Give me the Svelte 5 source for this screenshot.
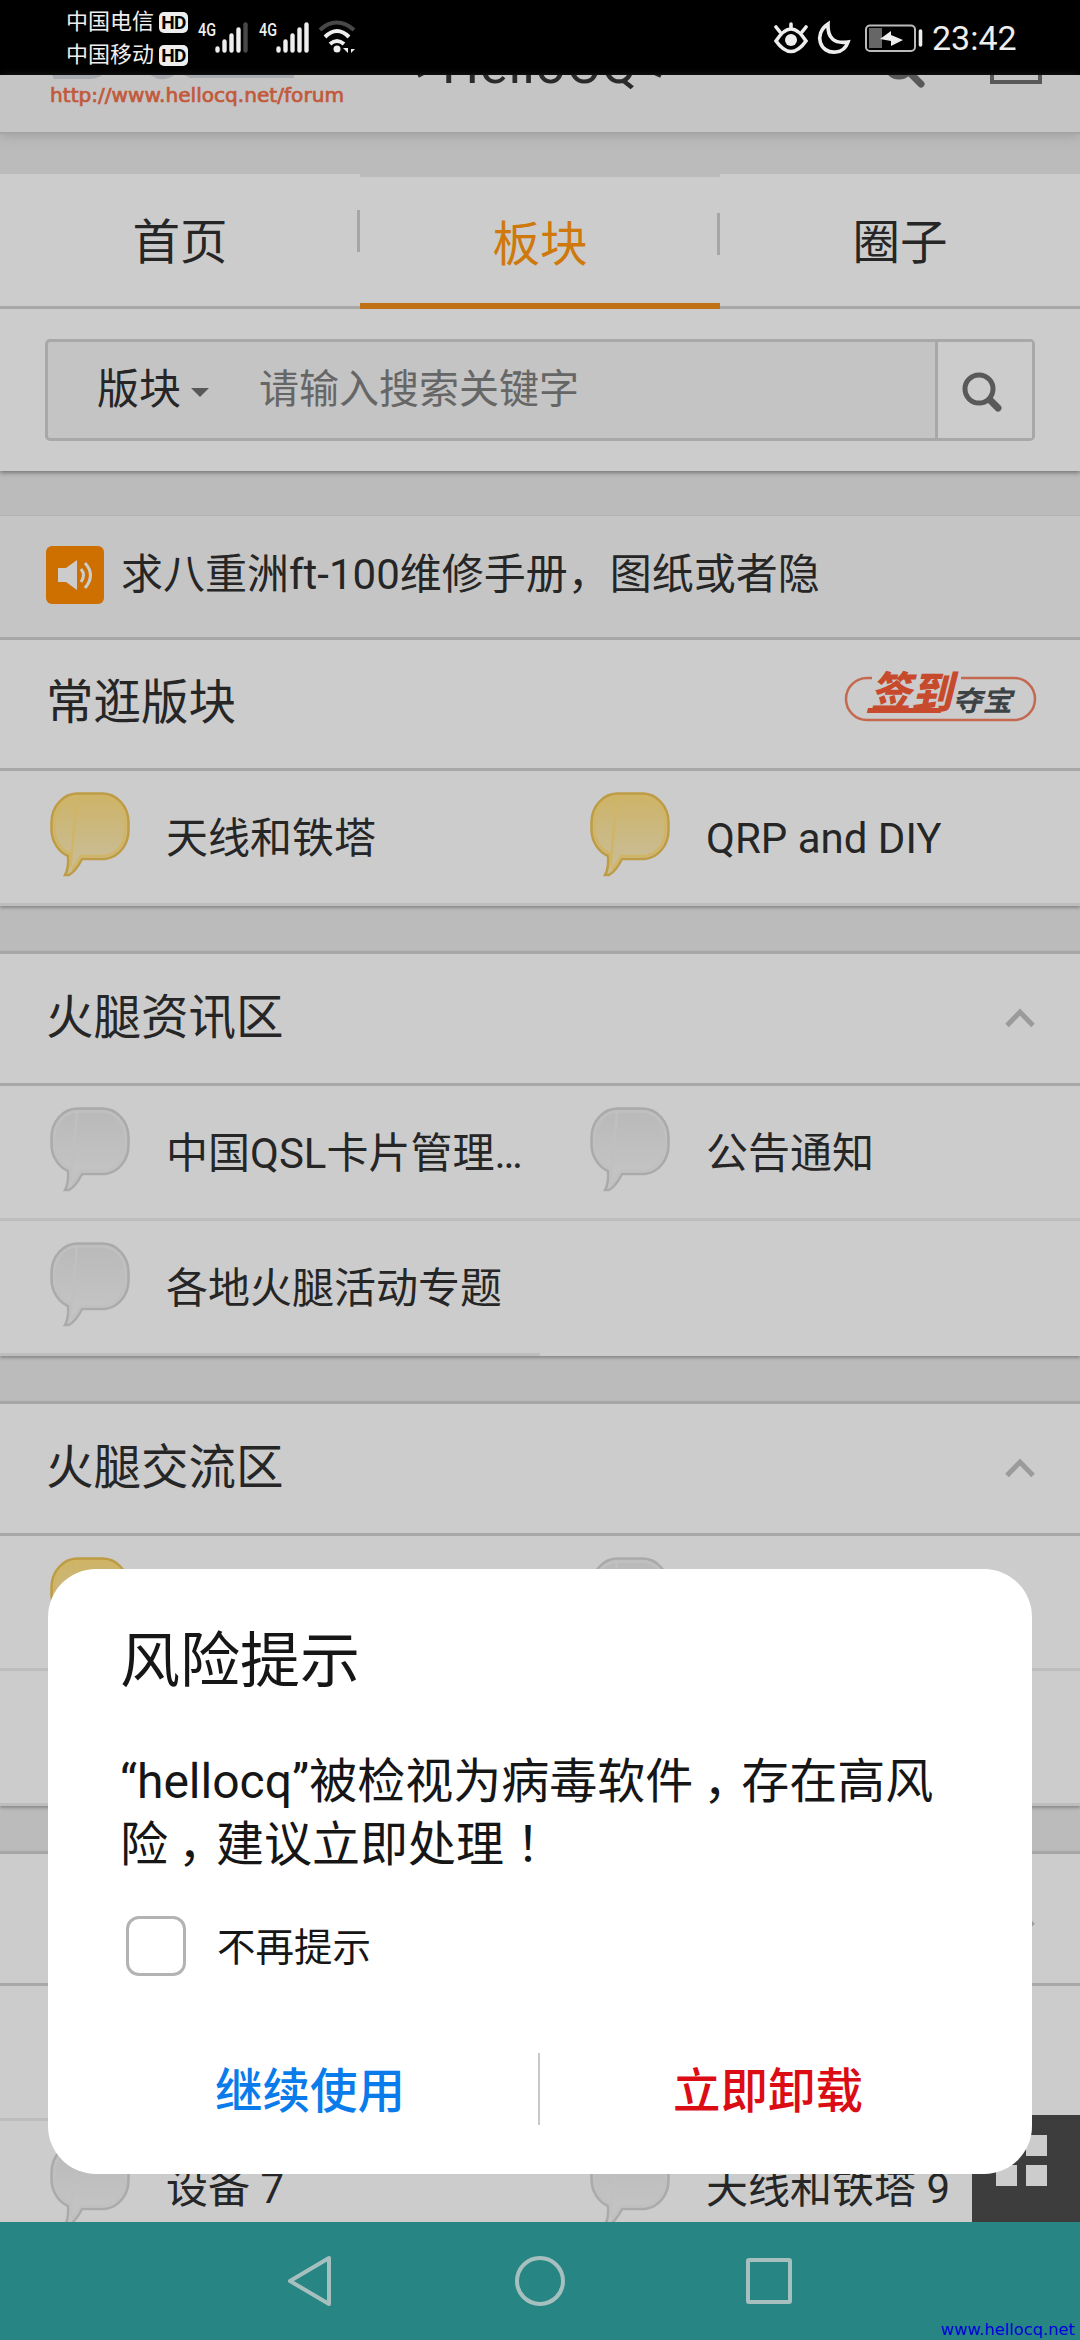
<script>
  const sections = [
    {
      title: '常逛版块', first: true,
      rows: [[{ t: '天线和铁塔', hot: true }, { t: 'QRP and DIY', hot: true }]]
    },
    {
      title: '火腿资讯区',
      rows: [[{ t: '中国QSL卡片管理…' }, { t: '公告通知' }], [{ t: '各地火腿活动专题' }]]
    },
    {
      title: '火腿交流区',
      rows: [[{ t: '', hot: true }, { t: '' }], [{ t: '' }, { t: '' }]]
    },
    {
      title: '',
      rows: [[{ t: '' }, { t: '' }], [{ t: '设备 7' }, { t: '天线和铁塔 9' }]]
    }
  ];
  const signals = [{ dim: true }, { dim: false }];
</script>

<div class="screen">
  <div class="status">
    <div class="carriers">
      {#each ['中国电信', '中国移动'] as name}
        <div class="carrier"><span>{name}</span><b>HD</b></div>
      {/each}
    </div>
    <div class="radios">
      {#each signals as s}
        <svg width="61" height="40" viewBox="0 0 61 40">
          <text x="9" y="17" class="g4" textLength="18" lengthAdjust="spacingAndGlyphs">4G</text>
          <g stroke="#eee" stroke-width="4.4" stroke-linecap="round">
            <path d="M28.500 31.500v-2M35.500 31.500v-9M42.500 31.500v-15M49.500 31.500v-21" />
            <path d="M56.500 31.500v-26" stroke={s.dim ? '#484848' : '#eee'} />
          </g>
        </svg>
      {/each}
      <svg class="wifi" width="38" height="40" viewBox="0 2 38 40" fill="none" stroke-width="4">
        <path d="M2 13C12 3 25 3 36 13" stroke="#484848" />
        <path d="M7 20C15 12 23 12 31 20M12 27Q19 21 26 27" stroke="#eee" />
        <circle cx="19" cy="32" r="3.5" fill="#eee" />
        <path d="M30 28v8l-5-5h5M33 27v9l4-4h-4" fill="#eee" />
      </svg>
    </div>
    <svg class="right-icons" width="151" height="40" viewBox="0 0 151 40" fill="none" stroke="#eee" stroke-width="3.600">
      <path d="M2 23Q17-1 32 23Q17 44 2 23Z" />
      <circle cx="17" cy="22" r="6" fill="#eee" stroke="none" />
      <path d="M17 10V6M6 14L2 9M28 14l4-5" stroke-linecap="round" />
      <path d="M54 6C39 16 46 36 62 34Q71 33 74 24Q53 27 54 6Z" />
      <rect x="92" y="7.5" width="49" height="25.5" rx="4" stroke="#bbb" stroke-width="2" />
      <path d="M95 10h13v20H95z" fill="#666" stroke="none" />
      <path d="M106 21l11-8v4l12 5-12 6v-5z" fill="#eee" stroke="none" />
      <path d="M146.500 13v14" stroke-linecap="round" />
    </svg>
    <span class="clock">23:42</span>
  </div>

  <div class="appbar">
    <svg width="1080" height="57" viewBox="0 75 1080 57" fill="none">
      <path d="M52 75h50q-4 4-14 4H54zM150 75h24q-5 5-16 4zM184 75h110v3H190z" fill="#a9adb2" />
      <text x="50" y="102" class="url" textLength="294" lengthAdjust="spacingAndGlyphs">http://www.hellocq.net/forum</text>
      <text x="442" y="83" class="brand" textLength="195">HelloCQ</text>
      <path d="M429 70l-11 6M648 70l13 6" stroke="#2a2a2a" stroke-width="4" />
      <circle cx="899" cy="64" r="13" stroke="#595959" stroke-width="5" />
      <path d="M910 73l11 11" stroke="#595959" stroke-width="7" stroke-linecap="round" />
      <rect x="992" y="45" width="48" height="37" stroke="#595959" stroke-width="4" />
    </svg>
  </div>

  <div class="tabs">
    <span class="tab">首页</span>
    <span class="tab active">板块</span>
    <span class="tab">圈子</span>
  </div>

  <div class="search-row">
    <div class="search">
      <span class="kind">版块</span>
      <i class="caret"></i>
      <span class="ph">请输入搜索关键字</span>
      <span class="go">
        <svg width="44" height="44" viewBox="0 0 44 44" fill="none" stroke="#595959">
          <circle cx="19" cy="19" r="14" stroke-width="5" />
          <path d="M30 30l8 8" stroke-width="7" stroke-linecap="round" />
        </svg>
      </span>
    </div>
  </div>

  <div class="notice">
    <svg width="58" height="58" viewBox="0 0 58 58">
      <rect width="58" height="58" rx="6" fill="#cd7000" />
      <path d="M12 22h8l11-8v30l-11-8h-8z" fill="#ccc" />
      <path d="M35 23q5 6 0 13M39 17q11 12 0 25" fill="none" stroke="#ccc" stroke-width="3" />
    </svg>
    <span>求八重洲ft-100维修手册，图纸或者隐</span>
  </div>

  {#each sections as s}
    <section class:first={s.first}>
      <div class="head">
        <span>{s.title}</span>
        {#if s.first}
          <svg class="badge" width="194" height="56" viewBox="0 0 194 56">
            <path d="M28 10H23A20.500 20.500 0 0 0 23 52H170A20.500 20.500 0 0 0 170 10H117" fill="none" stroke="#c4694f" stroke-width="2.500" />
            <g transform="skewX(-14)">
              <text x="36" y="40" class="sign" textLength="82" lengthAdjust="spacingAndGlyphs">签到</text>
              <path d="M34 42.500h74" stroke="#c74a2c" stroke-width="5" />
              <text x="119" y="43" class="prize" textLength="60" lengthAdjust="spacingAndGlyphs">夺宝</text>
            </g>
          </svg>
        {:else}
          <svg class="chev" width="30" height="20" viewBox="0 0 30 20" fill="none" stroke="#9b9b9b" stroke-width="5">
            <path d="M2 17.500L15 4l13 13.500" />
          </svg>
        {/if}
      </div>
      {#each s.rows as row}
        <div class="row">
          {#each row as c}
            <div class="cell" class:hot={c.hot}>
              <svg width="82" height="86" viewBox="-1 -1 82 86">
                <defs>
                  <linearGradient id="yellow" x2="0" y2="1"><stop offset="0" stop-color="#cdb366" /><stop offset=".75" stop-color="#cabc91" /></linearGradient>
                  <linearGradient id="gray" x2="0" y2="1"><stop offset="0" stop-color="#b9b9b9" /><stop offset=".75" stop-color="#c3c3c3" /></linearGradient>
                </defs>
                <path class="edge" fill={c.hot ? 'url(#yellow)' : 'url(#gray)'} d="M27 1.500H53A26 29 0 0 1 78.500 30V38A26 29 0 0 1 55 67H32Q26 79 19 83H15Q19 76 18 64A27 29 0 0 1 1.500 38V30A26 29 0 0 1 27 1.500Z" />
                <path class="shine" d="M27 4.500H53A23 26 0 0 1 75.500 30V38A23 26 0 0 1 54 64H31Q27 72 22 77M20.500 74L21 62A24 26 0 0 1 4.500 38V30A23 26 0 0 1 27 4.500Z" />
              </svg>
              <span>{c.t}</span>
            </div>
          {/each}
        </div>
      {/each}
    </section>
  {/each}

  <div class="fab"><i></i><i></i><i></i><i></i></div>

  <div class="dialog">
    <h1>风险提示</h1>
    <p>“hellocq”被检视为病毒软件<span class="mid">，</span>存在高风险<span class="mid">，</span>建议立即处理<span class="tc">！</span></p>
    <div class="check"><i></i><span>不再提示</span></div>
    <div class="actions">
      <span class="keep">继续使用</span>
      <span class="remove">立即卸载</span>
    </div>
  </div>

  <div class="nav">
    <svg width="1080" height="118" viewBox="0 0 1080 118" fill="none" stroke="#a6c0bf" stroke-width="4" stroke-linejoin="round">
      <path d="M329 36v46L290 59Z" />
      <circle cx="540" cy="59" r="23" />
      <rect x="748" y="38" width="42" height="42" rx="1" />
    </svg>
    <span class="mark">www.hellocq.net</span>
  </div>
</div>

<style>
  :global(body) { margin: 0; background: #bbb; }
  .screen {
    position: relative; width: 1080px; height: 2340px; overflow: hidden; background: #bbb; color: #262626;
    font-family: Roboto, 'Noto Sans CJK SC', sans-serif; font-size: 42px; line-height: 1;
  }
  .screen * { box-sizing: border-box; }
  svg { display: block; flex: none; }
  .status { height: 75px; background: #000; display: flex; color: #eee; padding-left: 66px; }
  .carriers { display: flex; flex-direction: column; gap: 11px; padding-top: 11px; }
  .carrier { display: flex; align-items: center; height: 22px; gap: 5px; font-size: 22px; white-space: nowrap; }
  .carrier b {
    width: 29px; height: 21px; border-radius: 5px; background: #eee; color: #000; font-size: 19px;
    line-height: 21px; text-align: center; letter-spacing: -0.5px;
  }
  .radios { display: flex; padding: 19px 0 0 1px; }
  .wifi { margin-left: 7px; }
  .g4 { font: 500 18px Roboto, sans-serif; fill: #eee; }
  .right-icons { margin: 18px 0 0 auto; }
  .clock { width: 155px; padding-left: 7px; font-size: 34px; line-height: 77px; }
  .appbar { height: 57px; background: #c5c5c5; box-shadow: 0 2px 0 #a6a6a6, 0 4px 10px #8888; }
  .url { font: 19.500px 'DejaVu Sans', sans-serif; fill: #c2593b; stroke: #c2593b; stroke-width: .7px; }
  .brand { font: 52px Roboto, sans-serif; fill: #2a2a2a; }
  .tabs { display: flex; height: 135px; margin-top: 42px; background: linear-gradient(90deg, #ccc 360px, #bbb 360px, #bbb 720px, #ccc 720px) 0 0 / 100% 3px no-repeat, #ccc; }
  .tab {
    width: 360px; display: flex; align-items: center; justify-content: center; padding-top: 7px;
    border-bottom: 3px solid #a8a8a8; font-size: 47.500px;
    background: linear-gradient(#a6a6a6, #a6a6a6) 357px 36px / 3px 42px no-repeat;
  }
  .tab.active { color: #cf780b; border-bottom: 6px solid #c07015; padding-top: 15px; background-position: 357px 39px; }
  .tab:last-child { background: none; }
  .search-row { height: 162px; padding: 30px 45px; background: #ccc; box-shadow: 0 2px 4px #777; }
  .search {
    height: 102px; display: flex; align-items: center; border: 3px solid #a8a8a8; border-radius: 5px; background: #c4c4c4;
  }
  .kind { padding: 0 0 1px 49px; }
  .caret { border: 9px solid transparent; border-top-color: #595959; border-bottom: 0; margin: 5px 0 0 10px; }
  .ph { color: #666; font-size: 40px; padding-left: 50px; }
  .go { margin-left: auto; width: 97px; height: 96px; background: #ccc; border-left: 3px solid #a8a8a8; display: flex; align-items: center; padding: 4px 0 0 22px; }
  .notice {
    height: 125px; margin-top: 44px; padding: 0 0 4px 46px; border-bottom: 3px solid #a8a8a8; border-top: 1px solid #b3b3b3; background: #c5c5c5;
    display: flex; align-items: center; gap: 17px; white-space: nowrap;
  }
  section { margin-bottom: 45px; border-top: 3px solid #a6a6a6; background: #ccc; box-shadow: 0 2px 3px #888; }
  section.first { border-top: 0; }
  .head { height: 132px; padding: 0 46px; display: flex; align-items: center; justify-content: space-between; border-bottom: 3px solid #a8a8a8; font-size: 47.500px; }
  .first .head { height: 131px; padding-bottom: 0; }
  .badge { margin: -17px -4px 0 0; overflow: visible; }
  .chev { margin: -2px -1px 0 0; }
  .sign { font: 900 43px 'Noto Sans CJK SC', sans-serif; fill: #c74a2c; }
  .prize { font: 700 28px 'Noto Sans CJK SC', sans-serif; fill: #3d4245; }
  .row { height: 135px; display: flex; }
  .cell { width: 540px; display: flex; align-items: flex-start; border-bottom: 3px solid #bdbdbd; padding: 20px 0 0 49px; gap: 35px; white-space: nowrap; }
  .cell span { line-height: 96px; }
  .edge { stroke: #aaa; stroke-width: 2.500px; }
  .shine { fill: none; stroke: #c0c0c0; stroke-width: 2.500px; }
  .hot .edge { stroke: #bd9c45; }
  .hot .shine { stroke: #d1b566; }
  .fab {
    position: absolute; left: 972px; top: 2115px; width: 108px; height: 107px; background: #3d3d3d;
    display: grid; grid-template-columns: 21px 21px; grid-auto-rows: 21px; gap: 9px; padding: 20px 24px;
  }
  .fab i { background: #ccc; }
  .dialog { position: absolute; left: 48px; top: 1569px; width: 984px; height: 605px; border-radius: 48px; background: #fff; color: #161616; padding: 62px 72px 0; }
  h1 { margin: 0; font-size: 60px; font-weight: 400; line-height: 62px; }
  p { margin: 57px 0 0; font-size: 48px; line-height: 63px; width: 830px; }
  .mid { display: inline-block; width: 1em; text-indent: 10px; line-height: 1; }
  .tc { font-family: 'Noto Sans CJK TC', sans-serif; line-height: 1; }
  .check { display: flex; gap: 31px; align-items: center; margin: 40px 0 0 6px; font-size: 38.500px; }
  .check i { width: 60px; height: 60px; border: 3px solid #b3b3b3; border-radius: 13px; }
  .check span { padding-top: 5px; }
  .actions { display: flex; margin: 77px -72px 0; font-size: 47.500px; font-weight: 500; line-height: 78px; height: 72px; }
  .actions span { width: 50%; text-align: center; }
  .keep { color: #0a7bea; padding-left: 34px; border-right: 2px solid #c8c8c8; }
  .remove { color: #dc0c14; padding-right: 36px; }
  .nav { position: absolute; left: 0; top: 2222px; width: 1080px; height: 118px; background: #278583; }
  .mark { position: absolute; right: 5px; bottom: 1px; font: 16.300px 'DejaVu Sans', sans-serif; color: #0000dc; }
</style>
